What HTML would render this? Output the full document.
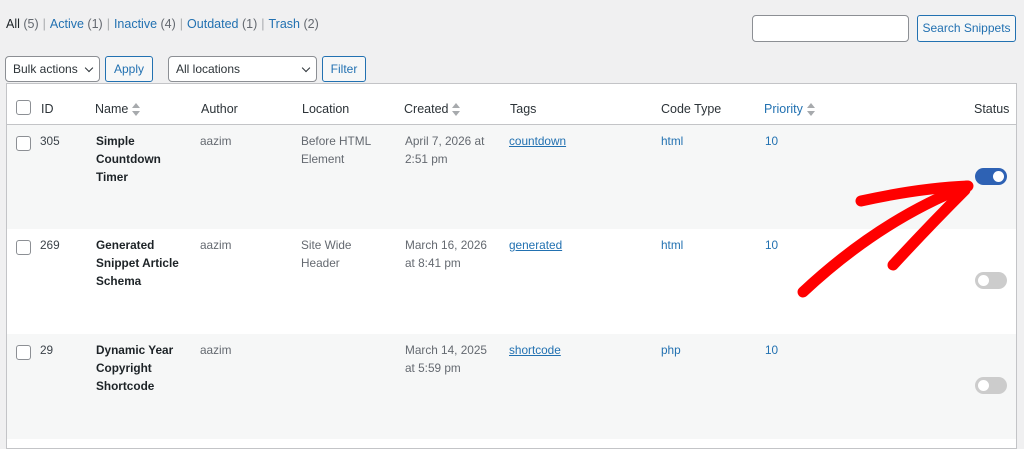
<!DOCTYPE html>
<html><head><meta charset="utf-8"><style>
*{box-sizing:border-box}
body{margin:0;width:1024px;height:446px;overflow:hidden;background:#f0f0f1;font-family:"Liberation Sans",sans-serif;font-size:13px;color:#3c434a;position:relative}
a{color:#2271b1;text-decoration:none}
.abs{position:absolute}
.sub{left:6px;top:17px;font-size:12.5px;color:#646970}
.sub b{font-weight:normal;color:#1d2327}
.sub .sep{color:#a7aaad;margin:0 4px}
.inp{border:1px solid #8c8f94;border-radius:4px;background:#fff}
.btn{border:1px solid #2271b1;border-radius:3px;background:#f6f7f7;color:#2271b1;font-size:12px;text-align:center}
.sel{border:1px solid #8c8f94;border-radius:4px;background:#fff;font-size:12px;color:#2c3338;padding-left:7px;line-height:24px}
.chev{position:absolute;right:7px;top:8px;width:6px;height:6px;border-right:1.5px solid #2c3338;border-bottom:1.5px solid #2c3338;transform:rotate(45deg)}
.table{left:6px;top:83px;width:1011px;height:366px;background:#fff;border:1px solid #c3c4c7}
.row{position:absolute;left:0;width:1009px}
.cb{position:absolute;left:9px;width:15px;height:15px;border:1px solid #8c8f94;border-radius:3px;background:#fff}
.c{position:absolute;font-size:11.8px;line-height:18px}
.h{font-size:12.5px;color:#2c3338}
.sort{display:inline-block;vertical-align:middle;margin-left:4px}
.tog{position:absolute;left:968px;width:32px;height:17px;border-radius:9px}
.tog i{position:absolute;top:3px;width:11px;height:11px;border-radius:50%;background:#fff}
</style></head><body>
<div class="abs sub"><b>All</b> (5)<span class="sep">|</span><a>Active</a> (1)<span class="sep">|</span><a>Inactive</a> (4)<span class="sep">|</span><a>Outdated</a> (1)<span class="sep">|</span><a>Trash</a> (2)</div>
<div class="abs inp" style="left:752px;top:15px;width:157px;height:27px"></div>
<div class="abs btn" style="left:917px;top:15px;width:99px;height:27px;line-height:25px">Search Snippets</div>
<div class="abs sel" style="left:5px;top:56px;width:95px;height:26px">Bulk actions<span class="chev"></span></div>
<div class="abs btn" style="left:105px;top:56px;width:48px;height:26px;line-height:24px">Apply</div>
<div class="abs sel" style="left:168px;top:56px;width:149px;height:26px">All locations<span class="chev"></span></div>
<div class="abs btn" style="left:322px;top:56px;width:44px;height:26px;line-height:24px">Filter</div>

<div class="abs table">
 <div class="row" style="top:0;height:41px;border-bottom:1px solid #c3c4c7">
  <div class="cb" style="top:16px"></div>
  <div class="c h" style="left:34px;top:16px">ID</div>
  <div class="c h" style="left:88px;top:16px">Name<svg class="sort" width="8" height="13"><path d="M0 5L4 0L8 5Z M0 8L4 13L8 8Z" fill="#a7aaad"/></svg></div>
  <div class="c h" style="left:194px;top:16px">Author</div>
  <div class="c h" style="left:295px;top:16px">Location</div>
  <div class="c h" style="left:397px;top:16px">Created<svg class="sort" width="8" height="13"><path d="M0 5L4 0L8 5Z M0 8L4 13L8 8Z" fill="#a7aaad"/></svg></div>
  <div class="c h" style="left:503px;top:16px">Tags</div>
  <div class="c h" style="left:654px;top:16px">Code Type</div>
  <div class="c h" style="left:757px;top:16px;color:#2271b1">Priority<svg class="sort" width="8" height="13"><path d="M0 5L4 0L8 5Z M0 8L4 13L8 8Z" fill="#a7aaad"/></svg></div>
  <div class="c h" style="left:967px;top:16px">Status</div>
 </div>
 <div class="row" style="top:41px;height:104px;background:#f6f7f7">
  <div class="cb" style="top:11px"></div>
  <div class="c" style="left:33px;top:7px">305</div>
  <div class="c" style="left:89px;top:7px;font-weight:bold;color:#1d2327;width:80px">Simple Countdown Timer</div>
  <div class="c" style="left:193px;top:7px;color:#646970">aazim</div>
  <div class="c" style="left:294px;top:7px;color:#646970;width:80px">Before HTML Element</div>
  <div class="c" style="left:398px;top:7px;color:#646970;width:90px">April 7, 2026 at 2:51 pm</div>
  <div class="c" style="left:502px;top:7px"><a style="text-decoration:underline">countdown</a></div>
  <div class="c" style="left:654px;top:7px"><a>html</a></div>
  <div class="c" style="left:758px;top:7px;color:#2271b1">10</div>
  <div class="tog" style="top:43px;background:#2e62b4"><i style="left:18px"></i></div>
 </div>
 <div class="row" style="top:145px;height:105px;background:#fff">
  <div class="cb" style="top:11px"></div>
  <div class="c" style="left:33px;top:7px">269</div>
  <div class="c" style="left:89px;top:7px;font-weight:bold;color:#1d2327;width:100px">Generated Snippet Article Schema</div>
  <div class="c" style="left:193px;top:7px;color:#646970">aazim</div>
  <div class="c" style="left:294px;top:7px;color:#646970;width:80px">Site Wide Header</div>
  <div class="c" style="left:398px;top:7px;color:#646970;width:90px">March 16, 2026 at 8:41 pm</div>
  <div class="c" style="left:502px;top:7px"><a style="text-decoration:underline">generated</a></div>
  <div class="c" style="left:654px;top:7px"><a>html</a></div>
  <div class="c" style="left:758px;top:7px;color:#2271b1">10</div>
  <div class="tog" style="top:43px;background:#ccc"><i style="left:3px"></i></div>
 </div>
 <div class="row" style="top:250px;height:105px;background:#f6f7f7">
  <div class="cb" style="top:11px"></div>
  <div class="c" style="left:33px;top:7px">29</div>
  <div class="c" style="left:89px;top:7px;font-weight:bold;color:#1d2327;width:90px">Dynamic Year Copyright Shortcode</div>
  <div class="c" style="left:193px;top:7px;color:#646970">aazim</div>
  <div class="c" style="left:398px;top:7px;color:#646970;width:90px">March 14, 2025 at 5:59 pm</div>
  <div class="c" style="left:502px;top:7px"><a style="text-decoration:underline">shortcode</a></div>
  <div class="c" style="left:654px;top:7px"><a>php</a></div>
  <div class="c" style="left:758px;top:7px;color:#2271b1">10</div>
  <div class="tog" style="top:43px;background:#ccc"><i style="left:3px"></i></div>
 </div>
</div>
<svg class="abs" style="left:0;top:0" width="1024" height="446">
 <g fill="none" stroke="#f00" stroke-width="11" stroke-linecap="round" stroke-linejoin="round">
  <path d="M803 292 Q880 220 967 186"/>
  <path d="M861 201 Q920 188 968 186"/>
  <path d="M893 265 Q930 225 965 190"/>
 </g>
</svg>
</body></html>
